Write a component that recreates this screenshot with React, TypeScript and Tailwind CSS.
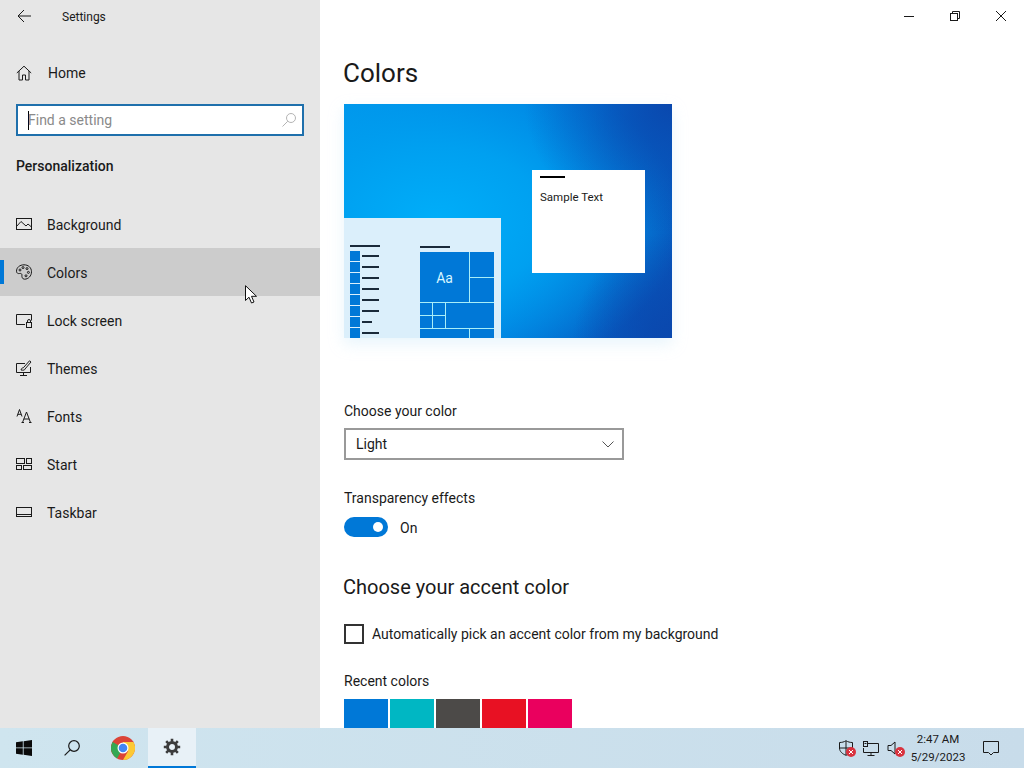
import type { ReactNode } from "react";

const stroke = { fill: "none", stroke: "currentColor", strokeWidth: 1 };

function Icon({ children, size = 16 }: { children: ReactNode; size?: number }) {
  return (
    <svg width={size} height={size} viewBox="0 0 16 16" className="shrink-0 text-[#1a1a1a]" {...stroke}>
      {children}
    </svg>
  );
}

const navItems: { label: string; icon: ReactNode; active?: boolean }[] = [
  {
    label: "Background",
    icon: (
      <Icon>
        <rect x="0.5" y="2.5" width="15" height="11" />
        <path d="M0.5 10.5 L5 5.5 L10 10 L12 8 L15.5 11" />
      </Icon>
    ),
  },
  {
    label: "Colors",
    active: true,
    icon: (
      <Icon>
        <path d="M8 .8C3.6.8.5 3.6.5 7.2c0 2 1.6 2.6 3 2.3 1.4-.3 2.6.2 2.4 1.7-.2 1.6.4 4 2.6 4 3.8 0 7-3.3 7-7.4C15.5 3.6 12.3.8 8 .8Z" />
        <circle cx="4" cy="6" r="1" />
        <circle cx="7" cy="3.6" r="1" />
        <circle cx="11" cy="4.6" r="1" />
        <circle cx="12.4" cy="8.4" r="1" />
        <circle cx="10" cy="11.8" r="1" />
      </Icon>
    ),
  },
  {
    label: "Lock screen",
    icon: (
      <Icon>
        <path d="M9 12.5H.5v-10h15v6" />
        <rect x="10.5" y="10.5" width="5" height="5" />
        <path d="M11.5 10.5V9a1.5 1.5 0 0 1 3 0v1.5" />
      </Icon>
    ),
  },
  {
    label: "Themes",
    icon: (
      <Icon>
        <path d="M9 3.5H.5v9h14V7M7.5 12.5v2.5M4 15.5h7" />
        <path d="M5 10c.5-2 1.500-2.200 2.300-2.200L13.500.8l1.500 1.200-6 7c0 1-1.500 1.500-4 1Z" />
      </Icon>
    ),
  },
  {
    label: "Fonts",
    icon: (
      <Icon>
        <path d="M1 8.500 3.500 1.500 6 8.500M1.800 6.300h3.400" />
        <path d="M6.500 14.500 10.500 4l4 10.500M7.800 11h5.400M5.500 14.500h2.500M13 14.500h2.500" />
      </Icon>
    ),
  },
  {
    label: "Start",
    icon: (
      <Icon>
        <rect x="0.500" y="2.500" width="8" height="5" />
        <rect x="10.500" y="2.500" width="5" height="5" />
        <rect x="0.500" y="9.500" width="5" height="4" />
        <rect x="7.500" y="9.500" width="8" height="4" />
      </Icon>
    ),
  },
  {
    label: "Taskbar",
    icon: (
      <Icon>
        <rect x="0.500" y="3.500" width="15" height="9" />
        <path d="M.5 10.500h15" />
      </Icon>
    ),
  },
];

function Sidebar() {
  return (
    <aside className="w-[320px] shrink-0 bg-[#e6e6e6] text-[#1a1a1a]">
      <div className="flex h-[32px] items-center pl-[16px]">
        <svg width="16" height="16" viewBox="0 0 16 16" fill="none" stroke="currentColor" className="-mt-[1px]">
          <path d="M15 8H2M8 2 2 8l6 6" />
        </svg>
        <span className="ml-[29px] pl-px pt-[1px] text-[12px]">Settings</span>
      </div>
      <div className="mt-[17px] flex h-[48px] items-center gap-[16px] pl-[16px] text-[14px]">
        <Icon>
          <path d="M.8 8 8 1.200 15.200 8M3 6v9h3.500v-5h3v5H13V6" />
        </Icon>
        <span>Home</span>
      </div>
      <div className="mx-[16px] mt-[7px] flex h-[32px] items-center justify-between border-2 border-[#1f70ac] bg-white pl-[10px] pr-[5px] text-[14px]">
        <div className="flex items-center">
          <span className="h-[19px] w-px bg-black" />
          <span className="-ml-px text-[#8a8a8a]">Find a setting</span>
        </div>
        <svg width="16" height="16" viewBox="0 0 16 16" fill="none" stroke="#b4b4b4">
          <circle cx="10" cy="6" r="4.500" />
          <path d="M6.800 9.200 1.500 14.500" />
        </svg>
      </div>
      <div className="mt-[20px] flex h-[20px] items-center pl-[16px] text-[14px] font-medium">Personalization</div>
      <nav className="mt-[24px]">
        {navItems.map((item) => (
          <div
            key={item.label}
            className={`flex h-[48px] items-center ${item.active ? "bg-[#cccccc]" : ""}`}
          >
            <span className={`h-[24px] w-[4px] ${item.active ? "bg-[#0078d7]" : ""}`} />
            <span className="ml-[12px] mr-[15px]">{item.icon}</span>
            <span className="pt-[2px] text-[14px]">{item.label}</span>
          </div>
        ))}
      </nav>
    </aside>
  );
}

function WindowControls() {
  return (
    <div className="flex h-[32px] justify-end text-[#1a1a1a]">
      <div className="flex w-[46px] items-center justify-center">
        <svg width="10" height="10" viewBox="0 0 10 10" stroke="currentColor">
          <path d="M0 5.500h10" />
        </svg>
      </div>
      <div className="flex w-[46px] items-center justify-center">
        <svg width="10" height="10" viewBox="0 0 10 10" fill="none" stroke="currentColor">
          <rect x="0.500" y="2.500" width="7" height="7" />
          <path d="M2.500 2.500v-2h7v7h-2" />
        </svg>
      </div>
      <div className="flex w-[46px] items-center justify-center">
        <svg width="10" height="10" viewBox="0 0 10 10" stroke="currentColor">
          <path d="M0 0l10 10M10 0 0 10" />
        </svg>
      </div>
    </div>
  );
}

const listLines = [17, 17, 17, 17, 17, 17, 10, 17];

function StartPreview() {
  return (
    <div className="mt-auto flex h-[120px] w-[157px] items-end bg-[#dbeffb] pl-[6px]">
      <div className="w-[30px]">
        <div className="mb-[4px] h-[2px] w-[30px] bg-[#1a2a3a]" />
        <div className="flex h-[87px] flex-col gap-px overflow-hidden">
          {listLines.map((w, i) => (
            <div key={i} className="flex h-[10px] shrink-0 items-center gap-[2px]">
              <span className="h-[10px] w-[10px] bg-[#0078d7]" />
              <span className="h-[2px] bg-[#1a2a3a]" style={{ width: w }} />
            </div>
          ))}
        </div>
      </div>
      <div className="ml-[40px]">
        <div className="mb-[4px] h-[2px] w-[30px] bg-[#1a2a3a]" />
        <div className="grid h-[86px] w-[74px] grid-cols-[12px_12px_23px_24px] grid-rows-[25px_24px_12px_12px_9px] gap-px bg-[#a8eef8]">
          <div className="col-span-3 row-span-2 flex items-center justify-center bg-[#0078d7] pt-[2px] text-[14px] text-[#d8f6ff]">Aa</div>
          <div className="bg-[#0078d7]" />
          <div className="bg-[#0078d7]" />
          <div className="bg-[#0078d7]" />
          <div className="bg-[#0078d7]" />
          <div className="col-span-2 row-span-2 bg-[#0078d7]" />
          <div className="bg-[#0078d7]" />
          <div className="bg-[#0078d7]" />
          <div className="col-span-3 bg-[#0078d7]" />
          <div className="bg-[#0078d7]" />
        </div>
      </div>
    </div>
  );
}

function Preview() {
  return (
    <div className="mt-[12px] flex h-[234px] w-[328px] bg-[#0a5cc4] bg-[radial-gradient(ellipse_45%_55%_at_100%_0%,#0a48ae_0%,rgba(10,72,174,0)_100%),radial-gradient(ellipse_30%_45%_at_100%_100%,#0a48ae_0%,rgba(10,72,174,0)_100%),radial-gradient(ellipse_75%_70%_at_28%_50%,#00aef9_0%,#00a0f0_45%,rgba(0,120,225,0)_100%),linear-gradient(115deg,#0094ea_0%,#0078dc_58%,#0a4cb2_100%)] shadow-[0_6px_14px_rgba(190,225,245,0.35)]">
      <StartPreview />
      <div className="ml-[31px] mt-[66px] h-[103px] w-[113px] bg-white px-[8px] pt-[6px] text-[#1a1a1a]">
        <div className="h-[2px] w-[25px] bg-black" />
        <div className="mt-[11px] text-[11.5px] leading-[16px]">Sample Text</div>
      </div>
    </div>
  );
}

const recentColors = ["bg-[#0078d7]", "bg-[#00b7c3]", "bg-[#4c4a48]", "bg-[#e81123]", "bg-[#ea005e]"];

function Content() {
  return (
    <main className="min-w-0 flex-1 overflow-hidden bg-white text-[#1a1a1a]">
      <WindowControls />
      <div className="pl-[24px]">
        <h1 className="-ml-[1px] mt-[20px] flex h-[40px] items-center pt-[2px] text-[26px] font-normal">Colors</h1>
        <Preview />
        <div className="mt-[63px] flex h-[20px] items-center text-[14px]">Choose your color</div>
        <div className="mt-[7px] flex h-[32px] w-[280px] items-center justify-between border-2 border-[#999999] pl-[10px] pr-[8px] text-[14px]">
          <span>Light</span>
          <svg width="12" height="7" viewBox="0 0 12 7" fill="none" stroke="#555555">
            <path d="M.5.500 6 6 11.500.500" />
          </svg>
        </div>
        <div className="mt-[28px] flex h-[20px] items-center text-[14px]">Transparency effects</div>
        <div className="mt-[9px] flex h-[20px] items-center gap-[12px]">
          <div className="flex h-[20px] w-[44px] items-center justify-end rounded-full bg-[#0078d7] pr-[5px]">
            <span className="h-[10px] w-[10px] rounded-full bg-white" />
          </div>
          <span className="pt-[2px] text-[14px]">On</span>
        </div>
        <h2 className="-ml-[1px] mt-[36px] flex h-[28px] items-center text-[20px] font-normal">Choose your accent color</h2>
        <div className="mt-[23px] flex h-[20px] items-center gap-[8px]">
          <span className="h-[20px] w-[20px] border-2 border-[#333333]" />
          <span className="text-[14px]">Automatically pick an accent color from my background</span>
        </div>
        <div className="mt-[27px] flex h-[20px] items-center text-[14px]">Recent colors</div>
        <div className="mt-[8px] flex gap-[2px]">
          {recentColors.map((c) => (
            <div key={c} className={`h-[44px] w-[44px] shrink-0 ${c}`} />
          ))}
        </div>
      </div>
    </main>
  );
}

function ChromeLogo() {
  return (
    <svg width="24" height="24" viewBox="0 0 24 24">
      <circle cx="12" cy="12" r="12" fill="#db4437" />
      <path d="M12 12 1.600 18A12 12 0 0 1 3 4l9 8Z" fill="#db4437" />
      <path d="M1.600 6 12 12 6 22.400A12 12 0 0 1 1.600 6Z" fill="#34a853" />
      <path d="M12 6h10.400A12 12 0 0 1 12 24l5.200-9L12 12Z" fill="#fcc934" />
      <circle cx="12" cy="12" r="5.500" fill="#fff" />
      <circle cx="12" cy="12" r="4.300" fill="#4285f4" />
    </svg>
  );
}

function XBadge() {
  return (
    <svg width="10" height="10" viewBox="0 0 10 10" className="absolute -bottom-[1px] -right-[2px]">
      <circle cx="5" cy="5" r="5" fill="#d9333f" />
      <path d="M3 3l4 4M7 3 3 7" stroke="#fff" />
    </svg>
  );
}

function Taskbar() {
  return (
    <footer className="flex h-[40px] shrink-0 items-center bg-[linear-gradient(90deg,#cfe5ef,#c8dcea)] text-[#1a1a1a]">
      <div className="flex h-full w-[48px] items-center justify-center">
        <svg width="16" height="16" viewBox="0 0 16 16" fill="#0a0a0a">
          <path d="M0 2.300 6.800 1.300V7.500H0ZM7.600 1.200 16 0V7.500H7.600ZM0 8.300H6.800V14.700L0 13.700ZM7.600 8.300H16V16L7.600 14.800Z" />
        </svg>
      </div>
      <div className="flex h-full w-[48px] items-center justify-center">
        <svg width="16" height="16" viewBox="0 0 16 16" fill="none" stroke="currentColor" strokeWidth="1.200">
          <circle cx="10" cy="6" r="5.300" />
          <path d="M6.200 9.800.6 15.400" />
        </svg>
      </div>
      <div className="flex h-full w-[52px] items-center justify-center pl-[2px]">
        <ChromeLogo />
      </div>
      <div className="flex h-full w-[48px] items-center justify-center border-b-2 border-[#0078d7] bg-[#e8f1f7]">
        <svg width="18" height="18" viewBox="0 0 18 18" fill="none" stroke="#3c3c3c">
          <circle cx="9" cy="9" r="4.500" strokeWidth="3" />
          <path d="M9 .8v3M9 14.200v3M.8 9h3M14.200 9h3M3.200 3.200l2.100 2.100M12.700 12.700l2.100 2.100M3.200 14.800l2.100-2.100M12.700 5.300l2.100-2.100" strokeWidth="2.600" />
        </svg>
      </div>
      <div className="ml-auto flex h-full items-center">
        <div className="relative flex w-[16px] justify-center">
          <svg width="16" height="16" viewBox="0 0 16 16" fill="none" stroke="currentColor">
            <path d="M8 .7c2 1.300 4 1.800 6.500 1.800V8c0 3.500-3 6-6.500 7.300C4.500 14 1.500 11.500 1.500 8V2.500C4 2.500 6 2 8 .7ZM8 1v14M1.500 8h13" />
          </svg>
          <XBadge />
        </div>
        <div className="ml-[9px] flex w-[16px] justify-center">
          <svg width="16" height="16" viewBox="0 0 16 16" fill="none" stroke="currentColor">
            <path d="M5 3.500h10.500v9H.5V8M8 12.500v2.500M4.500 15.500h7" />
            <rect x="0.500" y="1.500" width="4" height="5" />
            <path d="M1.500 3.500h2" />
          </svg>
        </div>
        <div className="relative ml-[8px] flex w-[16px] justify-center">
          <svg width="16" height="16" viewBox="0 0 16 16" fill="none" stroke="currentColor">
            <path d="M1 5.500h3L8 2v12L4 10.500H1Z" />
          </svg>
          <XBadge />
        </div>
        <div className="ml-[2px] flex w-[66px] flex-col items-center text-[11.5px] leading-[18px]">
          <span>2:47 AM</span>
          <span>5/29/2023</span>
        </div>
        <div className="mr-[13px] flex w-[40px] justify-center">
          <svg width="16" height="16" viewBox="0 0 16 16" fill="none" stroke="currentColor">
            <path d="M.5 1.500h15v11h-5L8 15l-2.500-2.500h-5Z" />
          </svg>
        </div>
      </div>
    </footer>
  );
}

export default function App() {
  return (
    <div className="relative flex h-[768px] w-[1024px] flex-col overflow-hidden font-['Roboto','Noto_Sans',sans-serif]">
      <div className="flex h-[728px]">
        <Sidebar />
        <Content />
      </div>
      <Taskbar />
      {/* mouse pointer sits over the sidebar */}
      <svg width="14" height="20" viewBox="0 0 14 20" className="absolute left-[245px] top-[285px]">
        <path d="M.5.700V15.500L4 12.200 6.500 18l2.500-1-2.500-5.700h5Z" fill="#fff" stroke="#111" />
      </svg>
    </div>
  );
}
